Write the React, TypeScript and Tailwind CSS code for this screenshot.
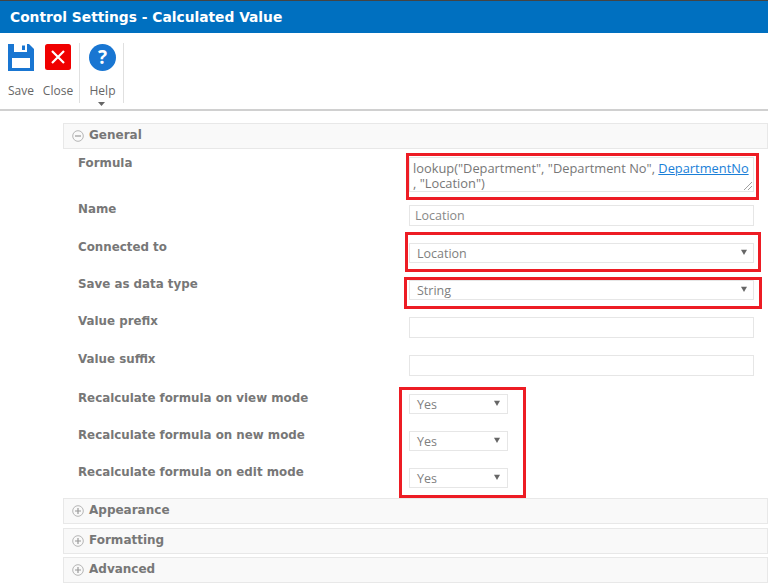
const sans = "font-['Open_Sans',sans-serif]";
const dv = "font-['DejaVu_Sans',sans-serif]";

function Caret() {
  return <svg width="6" height="6" viewBox="0 0 7 7" className="shrink-0 -mt-[4px]"><path d="M0 1h7L3.5 7z" fill="#666" /></svg>;
}

function Select({ value, wide }: { value: string; wide?: boolean }) {
  return (
    <div className={`${wide ? "w-[345px] pr-[6px]" : "w-[99px] pr-[7px]"} h-[20px] flex items-center justify-between border border-[#e6e6e6] bg-white pl-[7px] pt-[2px] text-[12.5px] text-[#808080] ${sans}`}>
      <span>{value}</span>
      <Caret />
    </div>
  );
}

function Input({ value = "" }: { value?: string }) {
  return (
    <div className={`w-[345px] h-[21px] flex items-center border border-[#e6e6e6] bg-white pl-[5px] pt-[2px] text-[12.5px] text-[#888] ${sans}`}>{value}</div>
  );
}

function Label({ children, up }: { children: string; up: string }) {
  return <div className={`w-[346px] pl-[15px] text-[11.85px] leading-[16px] font-bold text-[#777] ${dv} ${up}`}>{children}</div>;
}

function Red({ className }: { className: string }) {
  return <div className={`absolute border-[3px] border-[#ed1c24] pointer-events-none ${className}`} />;
}

function Section({ title, open, className = "" }: { title: string; open?: boolean; className?: string }) {
  return (
    <div className={`h-[26px] flex items-center border border-[#e8e8e8] bg-[#f9f9f9] pl-[8px] gap-[5px] ${className}`}>
      <svg width="12" height="12" viewBox="0 0 12 12">
        <circle cx="6" cy="6" r="5.3" fill="none" stroke="#b5b5b5" />
        <path d={open ? "M3 6h6" : "M3 6h6M6 3v6"} stroke="#999" strokeWidth="1.2" />
      </svg>
      <span className={`text-[12px] leading-[16px] -mt-[2px] font-bold text-[#777] ${dv}`}>{title}</span>
    </div>
  );
}

function ToolLabel({ children }: { children: string }) {
  return <span className={`text-[12px] leading-[16px] text-[#666] ${sans}`}>{children}</span>;
}

export default function App() {
  return (
    <div className="w-[768px] h-[585px] overflow-hidden bg-white">
      <div className="h-[1px] bg-[#444]" />
      <div className={`h-[32px] bg-[#0070c0] flex items-center pl-[10px] text-[13.8px] font-bold text-white ${dv}`}>
        Control Settings - Calculated Value
      </div>
      <div className="h-[78px] border-b-2 border-[#d0d0d0] flex items-start pt-[10px]">
        <div className="w-[80px] h-[60px] border-r border-[#e0e0e0] flex">
          <div className="w-[42px] flex flex-col items-center">
            <svg width="26" height="27" viewBox="0 0 26 27" className="mt-[1px]">
              <path d="M0 0h21l5 5v22H0z" fill="#1976d2" />
              <rect x="6" y="0" width="13" height="8" fill="#fff" />
              <rect x="14" y="1.5" width="3" height="4.5" fill="#1976d2" />
              <rect x="4" y="14" width="18" height="10" fill="#fff" />
            </svg>
            <div className="mt-[6px]"><ToolLabel>Save</ToolLabel></div>
          </div>
          <div className="w-[32px] flex flex-col items-center">
            <svg width="26" height="26" viewBox="0 0 26 26" className="mt-[1px]">
              <rect width="26" height="26" rx="2.5" fill="#f00000" />
              <path d="M7 7l12 12M19 7L7 19" stroke="#fff" strokeWidth="2.2" />
            </svg>
            <div className="mt-[7px]"><ToolLabel>Close</ToolLabel></div>
          </div>
        </div>
        <div className="w-[44px] h-[60px] border-r border-[#e0e0e0] flex flex-col items-center relative pl-[2px]">
          <svg width="27" height="27" viewBox="0 0 27 27" className="mt-[1px]">
            <circle cx="13.5" cy="13.5" r="13.5" fill="#1976d2" />
            <text x="13.5" y="20" textAnchor="middle" fontSize="19" fontWeight="700" fill="#fff" fontFamily="'Open Sans',sans-serif">?</text>
          </svg>
          <div className="mt-[6px]"><ToolLabel>Help</ToolLabel></div>
          <svg width="7" height="4" viewBox="0 0 7 4" className="absolute top-[59px] left-[18px]"><path d="M0 0h7L3.5 4z" fill="#666" /></svg>
        </div>
      </div>

      <div className="pl-[63px] pt-[12px]">
        <Section title="General" open />

        <div className="h-[56px] flex items-start pt-[8px]">
          <Label up="-mt-[2px]">Formula</Label>
          <div className="relative w-[345px] h-[35px] border border-[#e6e6e6] bg-white pl-[3px]">
            <div className={`text-[12.85px] leading-[15px] pt-[3px] text-[#777] ${sans}`}>
              lookup("Department", "Department No", <span className="text-[#1a7fd8] underline">DepartmentNo</span>
              <br />, "Location")
            </div>
            <svg width="9" height="9" viewBox="0 0 9 9" className="absolute right-[1px] bottom-[1px]"><path d="M1 9L9 1M5 9l4-4" stroke="#888" strokeWidth="0.8" /></svg>
            <Red className="-left-[4px] -right-[6px] -top-[5px] -bottom-[9px]" />
          </div>
        </div>

        <div className="h-[38px] flex items-start">
          <Label up="-mt-[4px]">Name</Label>
          <Input value="Location" />
        </div>

        <div className="h-[37px] flex items-start">
          <Label up="-mt-[4px]">Connected to</Label>
          <div className="relative">
            <Select value="Location" wide />
            <Red className="-left-[4px] -right-[7px] -top-[11px] -bottom-[9px]" />
          </div>
        </div>

        <div className="h-[37px] flex items-start">
          <Label up="-mt-[4px]">Save as data type</Label>
          <div className="relative">
            <Select value="String" wide />
            <Red className="-left-[5px] -right-[8px] -top-[3px] -bottom-[9px]" />
          </div>
        </div>

        <div className="h-[38px] flex items-start">
          <Label up="-mt-[4px]">Value prefix</Label>
          <Input />
        </div>

        <div className="h-[39px] flex items-start">
          <Label up="-mt-[4px]">Value suffix</Label>
          <Input />
        </div>

        <div className="relative">
          <div className="h-[37px] flex items-start">
            <Label up="-mt-[4px]">Recalculate formula on view mode</Label>
            <Select value="Yes" />
          </div>
          <div className="h-[37px] flex items-start">
            <Label up="-mt-[4px]">Recalculate formula on new mode</Label>
            <Select value="Yes" />
          </div>
          <div className="h-[30px] flex items-start">
            <Label up="-mt-[4px]">Recalculate formula on edit mode</Label>
            <Select value="Yes" />
          </div>
          <Red className="left-[336px] w-[127px] -top-[7px] h-[111px]" />
        </div>

        <Section title="Appearance" />
        <Section title="Formatting" className="mt-[4px]" />
        <Section title="Advanced" className="mt-[3px]" />
      </div>
    </div>
  );
}
